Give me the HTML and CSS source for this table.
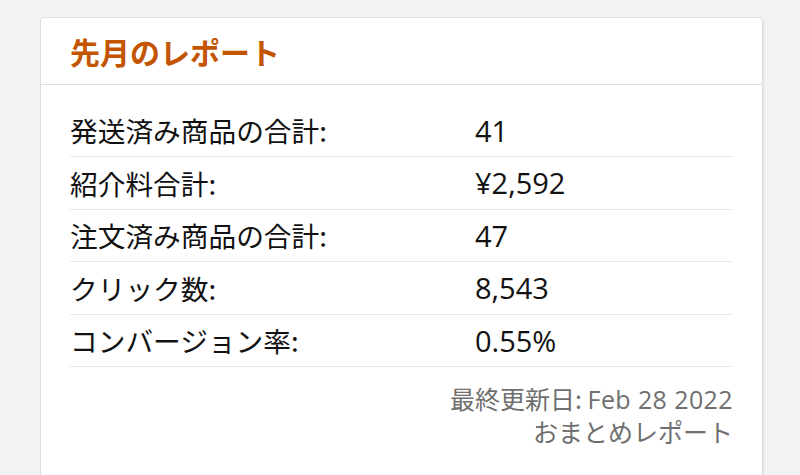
FILE: index.html
```html
<!DOCTYPE html>
<html lang="ja">
<head>
<meta charset="utf-8">
<link rel="stylesheet" href="styles.css">
</head>
<body>
<div class="card">
  <div class="card-header">
    <h2 class="title">先月のレポート</h2>
  </div>
  <div class="card-body">
    <div class="row"><span class="label">発送済み商品の合計:</span><span class="value">41</span></div>
    <div class="row"><span class="label">紹介料合計:</span><span class="value">¥2,592</span></div>
    <div class="row"><span class="label">注文済み商品の合計:</span><span class="value">47</span></div>
    <div class="row"><span class="label">クリック数:</span><span class="value">8,543</span></div>
    <div class="row"><span class="label">コンバージョン率:</span><span class="value">0.55%</span></div>
    <div class="footer">
      <div>最終更新日: <span class="num">Feb 28 2022</span></div>
      <div>おまとめレポート</div>
    </div>
  </div>
</div>
</body>
</html>
```
FILE: styles.css
```css
html, body {
  margin: 0;
  padding: 0;
  background: #f2f2f2;
  font-family: "Noto Sans CJK JP", "Open Sans", sans-serif;
}
.card {
  margin: 17px 0 0 40px;
  width: 721px;
  height: 500px;
  background: #fff;
  border: 1px solid #dddddd;
  border-radius: 4px;
  box-shadow: 1px 1px 2px rgba(0,0,0,0.05);
}
.card-header {
  height: 66px;
  border-bottom: 1px solid #dddddd;
  padding: 0 29px;
  display: flex;
  align-items: center;
}
.title {
  margin: 0;
  font-size: 30px;
  font-weight: 700;
  color: #c45500;
  line-height: 1;
}
.card-body {
  padding: 19.5px 29px 0 29px;
}
.row {
  display: grid;
  grid-template-columns: 405px 1fr;
  align-items: center;
  height: 51.5px;
  border-bottom: 1px solid #e9e9e9;
  font-size: 27.7px;
  color: #111111;
}
.value {
  font-family: "Open Sans", "Noto Sans CJK JP", sans-serif;
  font-size: 29px;
}
.footer {
  padding-top: 15px;
  text-align: right;
  font-size: 25px;
  line-height: 32px;
  color: #6f6f6f;
}
.num {
  font-family: "Open Sans", "Noto Sans CJK JP", sans-serif;
  letter-spacing: 0.4px;
}
```
